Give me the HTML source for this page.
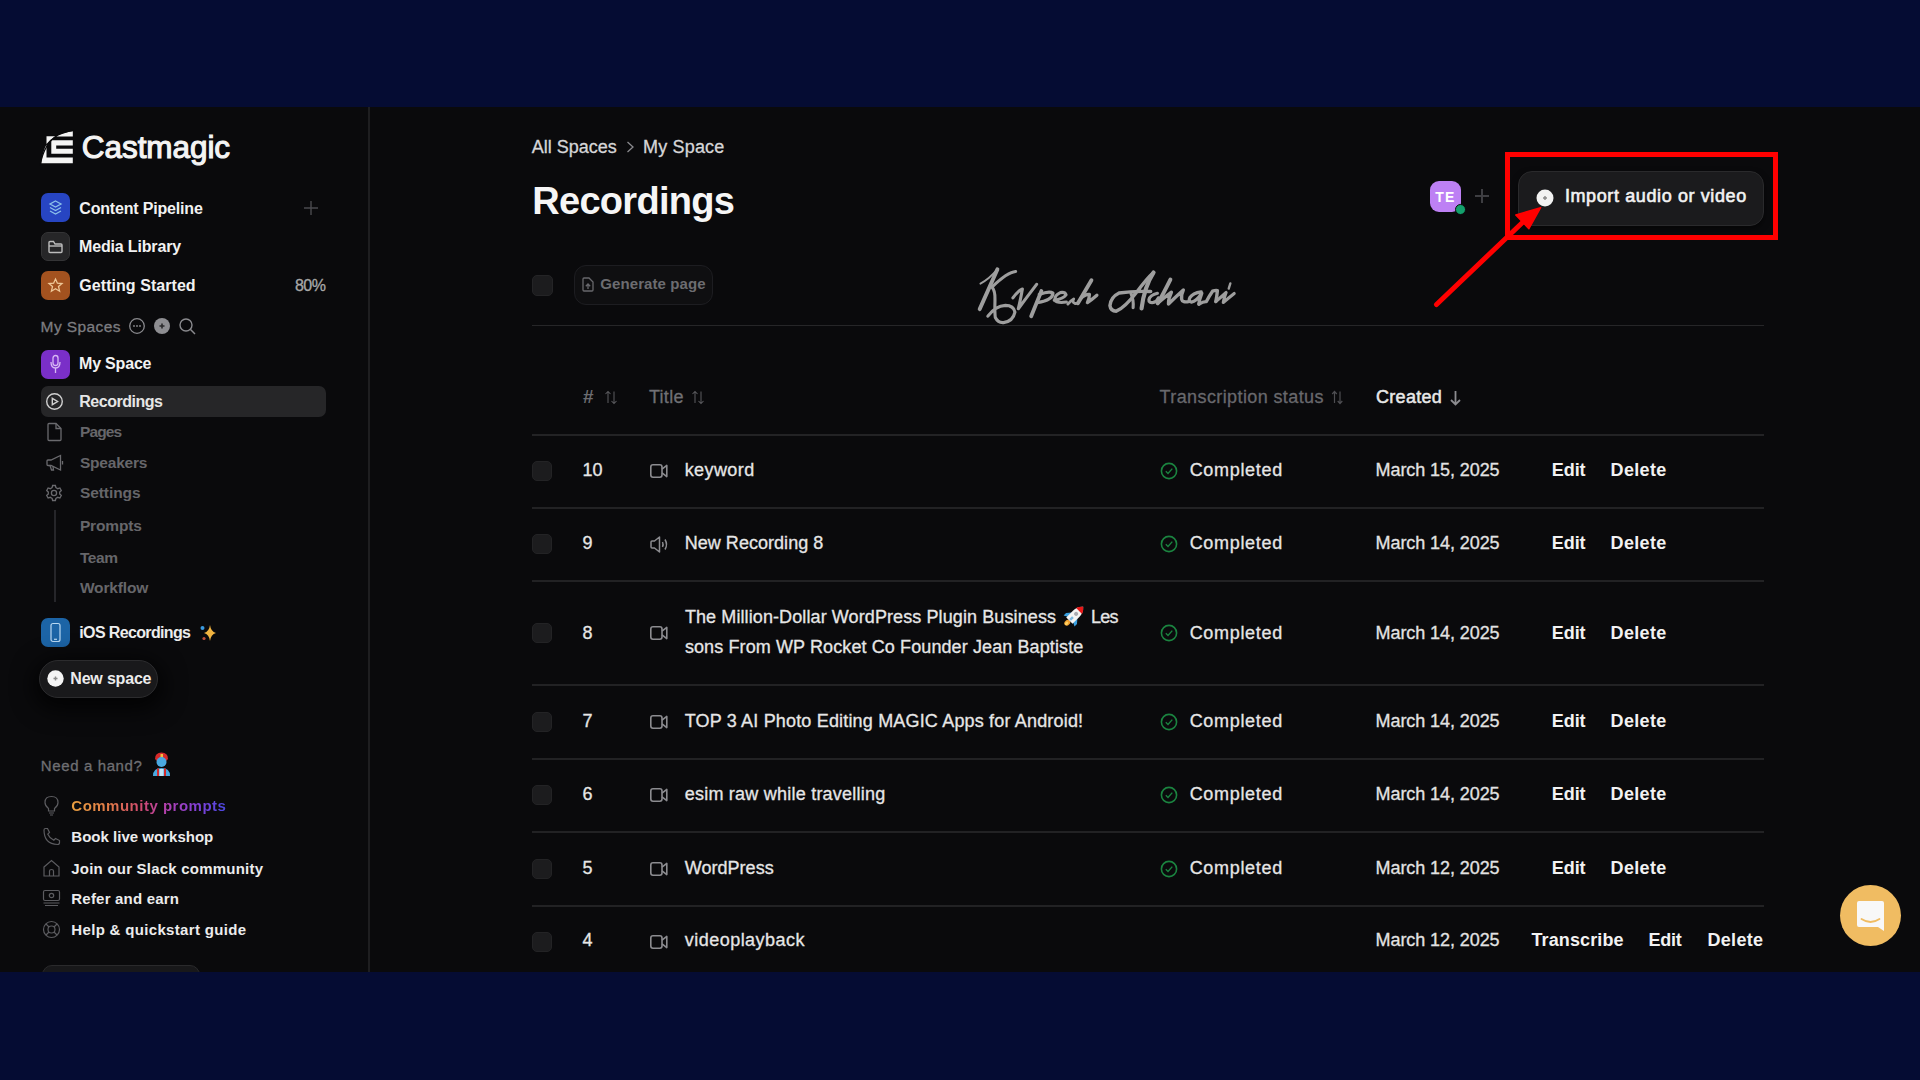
<!DOCTYPE html>
<html><head><meta charset="utf-8"><title>Castmagic</title>
<style>
html,body{margin:0;padding:0;}
body{width:1920px;height:1080px;overflow:hidden;background:#050c33;position:relative;font-family:"Liberation Sans",sans-serif;}
.app{position:absolute;left:0;top:107px;width:1920px;height:865px;background:#0a0a0c;overflow:hidden;}
.t{position:absolute;white-space:nowrap;}
.a{position:absolute;}
svg.a{overflow:visible;}
</style></head><body>
<div class="app"></div>
<!-- sidebar divider -->
<div class="a" style="left:368px;top:107px;width:2px;height:865px;background:#1e1e20"></div>

<!-- logo icon -->
<svg class="a" style="left:0;top:0" width="80" height="170" viewBox="0 0 80 170">
  <path d="M56 136.6 Q63 132 72.8 131.2 L72.8 136.6 Z" fill="#f4f4f4"/>
  <path d="M46.5 136.3 L55.6 136.3 Q50 139.5 46.5 144 Z" fill="#f4f4f4"/>
  <path d="M51.3 140.3 H72.8 V145.4 H56.2 V148.7 H72.8 V153.7 H51.3 Z" fill="#f4f4f4"/>
  <path d="M41.3 163.3 Q42.5 152 46.5 144.5 L46.5 157.6 H72.8 V163.3 Z" fill="#f4f4f4"/>
  <path d="M40 166 Q44 143 58 135 Q64 132 74 130" stroke="#0a0a0c" stroke-width="1.3" fill="none"/>
</svg>
<!-- sidebar top icons -->
<div class="a" style="left:41px;top:193px;width:29px;height:29px;border-radius:7px;background:#2745c2"></div>
<svg class="a" style="left:47px;top:199px" width="17" height="17" viewBox="0 0 17 17" fill="none" stroke="#8cc0ea" stroke-width="1.3">
  <path d="M8.5 2 L14 5 L8.5 8 L3 5 Z"/><path d="M3 8.5 L8.5 11.5 L14 8.5"/><path d="M3 12 L8.5 15 L14 12"/>
</svg>
<div class="a" style="left:41px;top:232px;width:27px;height:27px;border-radius:7px;background:#262628;border:1px solid #343436"></div>
<svg class="a" style="left:47px;top:239px" width="17" height="15" viewBox="0 0 17 15" fill="none" stroke="#bdbdbd" stroke-width="1.4">
  <path d="M2 4 L2 12.5 Q2 13.5 3 13.5 L14 13.5 Q15 13.5 15 12.5 L15 6 Q15 5 14 5 L8 5 L6.5 2.5 L3 2.5 Q2 2.5 2 3.5 Z"/><path d="M2 7 L15 7"/>
</svg>
<div class="a" style="left:41px;top:271px;width:29px;height:29px;border-radius:7px;background:#a3521f"></div>
<svg class="a" style="left:47px;top:277px" width="17" height="17" viewBox="0 0 17 17" fill="none" stroke="#efc898" stroke-width="1.3">
  <path d="M8.5 2 L10.4 6.2 L15 6.6 L11.5 9.6 L12.6 14.2 L8.5 11.8 L4.4 14.2 L5.5 9.6 L2 6.6 L6.6 6.2 Z"/>
</svg>
<!-- plus -->
<svg class="a" style="left:304px;top:201px" width="14" height="14" viewBox="0 0 14 14" stroke="#4a4a4e" stroke-width="1.4"><path d="M7 0V14M0 7H14"/></svg>

<!-- My Spaces icons -->
<svg class="a" style="left:128px;top:317px" width="70" height="20" viewBox="0 0 70 20" fill="none">
  <circle cx="9" cy="9" r="7.3" stroke="#8a8a8e" stroke-width="1.3"/>
  <circle cx="6" cy="9" r="0.9" fill="#8a8a8e"/><circle cx="9" cy="9" r="0.9" fill="#8a8a8e"/><circle cx="12" cy="9" r="0.9" fill="#8a8a8e"/>
  <circle cx="34" cy="9" r="8" fill="#8e8e92"/>
  <path d="M34 6.5V11.5M31.5 9H36.5" stroke="#2a2a2c" stroke-width="1.6"/>
  <circle cx="58" cy="8" r="6" stroke="#8a8a8e" stroke-width="1.4"/>
  <path d="M62.3 12.3 L67 17" stroke="#8a8a8e" stroke-width="1.5"/>
</svg>

<!-- My Space icon -->
<div class="a" style="left:41px;top:350px;width:29px;height:29px;border-radius:7px;background:#7a2fc8"></div>
<svg class="a" style="left:49px;top:354px" width="13" height="21" viewBox="0 0 13 21" fill="none" stroke="#d8b8f4" stroke-width="1.3">
  <rect x="4" y="1.5" width="5" height="10" rx="2.5"/><path d="M2 8 Q2 14 6.5 14 Q11 14 11 8"/><path d="M6.5 14V19"/>
</svg>

<!-- Recordings highlight -->
<div class="a" style="left:41px;top:386px;width:285px;height:31px;border-radius:7px;background:#262628"></div>
<svg class="a" style="left:45px;top:392px" width="19" height="19" viewBox="0 0 19 19" fill="none" stroke="#d0d0d0" stroke-width="1.4">
  <circle cx="9.5" cy="9.5" r="7.8"/><path d="M7.3 6.3 L12.6 9.5 L7.3 12.7 Z"/>
</svg>
<!-- Pages icon -->
<svg class="a" style="left:46px;top:422px" width="17" height="20" viewBox="0 0 17 20" fill="none" stroke="#6a6a6e" stroke-width="1.3">
  <path d="M2 2.5 Q2 1.5 3 1.5 L10 1.5 L15 6.5 L15 17.5 Q15 18.5 14 18.5 L3 18.5 Q2 18.5 2 17.5 Z"/><path d="M10 1.5 L10 6.5 L15 6.5"/>
</svg>
<!-- megaphone -->
<svg class="a" style="left:45px;top:454px" width="19" height="18" viewBox="0 0 19 18" fill="none" stroke="#6a6a6e" stroke-width="1.3">
  <path d="M2 6.5 L2 10.5 Q2 11.5 3 11.5 L6 11.5 L15.5 16 L15.5 1.5 L6 6 L3 6 Q2 6 2 7 Z"/><path d="M5 11.5 L6.5 16 L8.5 16 L8 12.5"/><path d="M17.5 7 L17.5 10.5"/>
</svg>
<!-- gear -->
<svg class="a" style="left:45px;top:484px" width="18" height="18" viewBox="0 0 18 18" fill="none" stroke="#6a6a6e" stroke-width="1.3">
  <circle cx="9" cy="9" r="2.6"/>
  <path d="M7.6 1.5 L10.4 1.5 L10.9 3.6 L12.8 4.7 L14.9 4 L16.3 6.5 L14.7 8 L14.7 10 L16.3 11.5 L14.9 14 L12.8 13.3 L10.9 14.4 L10.4 16.5 L7.6 16.5 L7.1 14.4 L5.2 13.3 L3.1 14 L1.7 11.5 L3.3 10 L3.3 8 L1.7 6.5 L3.1 4 L5.2 4.7 L7.1 3.6 Z"/>
</svg>
<!-- vertical tree line -->
<div class="a" style="left:54px;top:510px;width:1.5px;height:92px;background:#26262a"></div>

<!-- iOS icon -->
<div class="a" style="left:41px;top:618px;width:29px;height:29px;border-radius:7px;background:#1c64a6"></div>
<svg class="a" style="left:49px;top:622px" width="13" height="21" viewBox="0 0 13 21" fill="none" stroke="#b8d8f2" stroke-width="1.2">
  <rect x="2" y="1.5" width="9" height="18" rx="2"/><path d="M5 17.3H8"/>
</svg>
<!-- sparkles -->
<svg class="a" style="left:199px;top:624px" width="18" height="18" viewBox="0 0 18 18">
  <path d="M11 1 Q11.8 7.5 17 9 Q11.8 10.5 11 17 Q10.2 10.5 5 9 Q10.2 7.5 11 1 Z" fill="#f2b440"/>
  <circle cx="3.5" cy="4" r="2" fill="#3a9ae0"/>
  <circle cx="5" cy="14.5" r="1.6" fill="#c0503a"/>
</svg>

<!-- New space -->
<div class="a" style="left:39px;top:660px;width:119px;height:38px;border-radius:19px;box-shadow:0 6px 22px 6px rgba(0,0,0,0.75)"></div>
<div class="a" style="left:39px;top:660px;width:117px;height:36px;border-radius:19px;background:#19191b;border:1px solid #2c2c2e"></div>
<svg class="a" style="left:47px;top:670px" width="17" height="17" viewBox="0 0 17 17">
  <circle cx="8.5" cy="8.5" r="8.2" fill="#f4f4f4"/><path d="M8.5 6.5V10.5M6.5 8.5H10.5" stroke="#8a8a8a" stroke-width="1.4"/>
</svg>

<!-- Need a hand genie -->
<svg class="a" style="left:151px;top:752px" width="21" height="25" viewBox="0 0 21 25">
  <path d="M4 7 Q4 0.5 10.5 0.5 Q17 0.5 17 7 L15 9 L6 9 Z" fill="#d52a2a"/>
  <rect x="9.5" y="2" width="2.5" height="4" fill="#f0c040"/>
  <circle cx="10.5" cy="10" r="5" fill="#4aa8e0"/>
  <path d="M2 24 Q2 16 10.5 16 Q19 16 19 24 Z" fill="#4aa8e0"/>
  <rect x="6" y="16.5" width="2" height="7.5" fill="#d52a2a"/><rect x="13" y="16.5" width="2" height="7.5" fill="#d52a2a"/>
  <rect x="8.5" y="17" width="4" height="7" fill="#bfe4f8"/>
</svg>

<!-- help icons -->
<svg class="a" style="left:43px;top:795px" width="17" height="21" viewBox="0 0 17 21" fill="none" stroke="#5c5c60" stroke-width="1.2">
  <path d="M5.5 13.5 Q2 11 2 7.5 Q2 1.5 8.5 1.5 Q15 1.5 15 7.5 Q15 11 11.5 13.5 L11.5 16 L5.5 16 Z"/><path d="M6 18H11M7 20H10"/>
</svg>
<svg class="a" style="left:42px;top:827px" width="19" height="19" viewBox="0 0 19 19" fill="none" stroke="#5c5c60" stroke-width="1.2">
  <path d="M2 3 Q2 1.5 3.5 1.5 L5.5 1.5 L7.5 5.5 L5.8 7.2 Q7.5 11 11.8 13.2 L13.5 11.5 L17.5 13.5 L17.5 15.5 Q17.5 17.5 15.5 17.5 Q2 17 2 3 Z"/>
</svg>
<svg class="a" style="left:42px;top:859px" width="19" height="19" viewBox="0 0 19 19" fill="none" stroke="#5c5c60" stroke-width="1.2">
  <path d="M2 8 L9.5 1.5 L17 8 L17 17 L2 17 Z"/><path d="M7.5 17 L7.5 12 Q7.5 10.5 9.5 10.5 Q11.5 10.5 11.5 12 L11.5 17"/>
</svg>
<svg class="a" style="left:42px;top:889px" width="19" height="18" viewBox="0 0 19 18" fill="none" stroke="#5c5c60" stroke-width="1.2">
  <rect x="1.5" y="1.5" width="16" height="10" rx="1.5"/><circle cx="9.5" cy="6.5" r="2.2"/><path d="M1.5 14H17.5M3 16.5H16"/>
</svg>
<svg class="a" style="left:42px;top:920px" width="19" height="19" viewBox="0 0 19 19" fill="none" stroke="#5c5c60" stroke-width="1.2">
  <circle cx="9.5" cy="9.5" r="8"/><circle cx="9.5" cy="9.5" r="3.5"/><path d="M4 4L7 7M15 4L12 7M4 15L7 12M15 15L12 12"/>
</svg>
<!-- bottom partial button -->
<div class="a" style="left:42px;top:965px;width:158px;height:7px;overflow:hidden"><div style="width:156px;height:20px;border-radius:10px;background:#18181a;border:1px solid #2a2a2c"></div></div>

<!-- ===== MAIN ===== -->
<svg class="a" style="left:626px;top:141px" width="9" height="12" viewBox="0 0 9 12" fill="none" stroke="#8a8a8e" stroke-width="1.3"><path d="M1.5 1L7 6L1.5 11"/></svg>

<!-- avatar -->
<div class="a" style="left:1430px;top:181px;width:31px;height:31px;border-radius:9px;background:#bd80f4"></div>
<div class="a" style="left:1455px;top:204px;width:9px;height:9px;border-radius:50%;background:#13a06c;border:1px solid #0a0a0c"></div>
<svg class="a" style="left:1475px;top:189px" width="14" height="14" viewBox="0 0 14 14" stroke="#3e3e42" stroke-width="2"><path d="M7 0V14M0 7H14"/></svg>

<!-- import button -->
<div class="a" style="left:1518px;top:171px;width:244px;height:53px;border-radius:14px;background:#1b1b1d;border:1px solid #2a2a2c;box-shadow:0 3px 6px rgba(0,0,0,0.5)"></div>
<svg class="a" style="left:1536px;top:189px" width="18" height="18" viewBox="0 0 18 18">
  <circle cx="9" cy="9" r="8.5" fill="#f2f2f2"/><path d="M9 7V11M7 9H11" stroke="#8a8a8a" stroke-width="1.4"/>
</svg>
<!-- red annotation box -->
<div class="a" style="left:1505px;top:152px;width:263px;height:78px;border:5.5px solid #ff0000"></div>
<!-- arrow -->
<svg class="a" style="left:0;top:0" width="1920" height="1080" viewBox="0 0 1920 1080">
  <path d="M1436.5 304.5 L1523 222" stroke="#ff0000" stroke-width="5" stroke-linecap="round"/>
  <path d="M1540.6 207.7 L1515.8 215 L1528.9 228.7 Z" fill="#ff0000" stroke="#ff0000" stroke-width="1.5" stroke-linejoin="round"/>
</svg>

<!-- toolbar -->
<div class="a" style="left:532px;top:275px;width:19px;height:19px;border-radius:5px;background:#1c1c1e;border:1px solid #242426"></div>
<div class="a" style="left:574px;top:265px;width:137px;height:38px;border-radius:12px;background:#0f0f11;border:1px solid #1d1d21"></div>
<svg class="a" style="left:581px;top:277px" width="14" height="15" viewBox="0 0 14 15" fill="none" stroke="#68686c" stroke-width="1.3">
  <path d="M2 2 Q2 1 3 1 L8 1 L12 5 L12 13 Q12 14 11 14 L3 14 Q2 14 2 13 Z"/><path d="M7 7V12M4.8 9.2L7 7L9.2 9.2"/>
</svg>
<div class="a" style="left:532px;top:325px;width:1232px;height:1px;background:#262628"></div>

<!-- header sort icons -->
<svg class="a" style="left:604px;top:390px" width="14" height="15" viewBox="0 0 14 15" fill="none" stroke="#5a5a5e" stroke-width="1.05">
  <path d="M4 13V1.5M1.5 4L4 1.5L6.5 4"/><path d="M10 1.5V13.5M7.5 11L10 13.5L12.5 11"/>
</svg>
<svg class="a" style="left:691px;top:390px" width="14" height="15" viewBox="0 0 14 15" fill="none" stroke="#5a5a5e" stroke-width="1.05">
  <path d="M4 13V1.5M1.5 4L4 1.5L6.5 4"/><path d="M10 1.5V13.5M7.5 11L10 13.5L12.5 11"/>
</svg>
<svg class="a" style="left:1331px;top:390px" width="13" height="15" viewBox="0 0 13 15" fill="none" stroke="#4e4e52" stroke-width="1.2">
  <path d="M3.5 13V1.5M1.2 4L3.5 1.5L5.8 4"/><path d="M9 1.5V13.5M6.7 11L9 13.5L11.3 11"/>
</svg>
<svg class="a" style="left:1449px;top:390px" width="13" height="16" viewBox="0 0 13 16" fill="none" stroke="#8c8c90" stroke-width="1.8">
  <path d="M6.5 1V14.5M2 10L6.5 14.5L11 10"/>
</svg>
<div class="a" style="left:532px;top:434px;width:1232px;height:2px;background:#232325"></div>

<!-- rocket -->
<svg class="a" style="left:1058px;top:600px" width="32" height="32" viewBox="0 0 32 32">
 <g transform="rotate(45 16 16)">
  <ellipse cx="16" cy="25.5" rx="2.6" ry="3.2" fill="#f0a030"/>
  <ellipse cx="16" cy="26.5" rx="1.4" ry="2" fill="#ffd060"/>
  <path d="M12.2 15 L8.3 19.5 L8.3 23 L12.2 21 Z" fill="#3aa0e0"/>
  <path d="M19.8 15 L23.7 19.5 L23.7 23 L19.8 21 Z" fill="#3aa0e0"/>
  <path d="M16 3 Q20.5 7 20.5 13 L20.5 22.5 L11.5 22.5 L11.5 13 Q11.5 7 16 3 Z" fill="#f4f4f4"/>
  <path d="M16 3 Q19.5 6 20.2 8.8 L11.8 8.8 Q12.5 6 16 3 Z" fill="#e81818"/>
  <circle cx="16" cy="13" r="2.1" fill="#a8aab0"/>
  <rect x="14.8" y="17.5" width="2.4" height="4" fill="#7ab8e0"/>
 </g>
</svg>
<!-- chat widget -->
<div class="a" style="left:1839.5px;top:885px;width:61px;height:61px;border-radius:50%;background:#f0bc62"></div>
<svg class="a" style="left:1856px;top:900px" width="29" height="32" viewBox="0 0 29 32">
  <path d="M1 3 Q1 1 3 1 L26 1 Q28 1 28 3 L28 31 L22 27 L3 27 Q1 27 1 25 Z" fill="#f8f8f8"/>
  <path d="M5.5 19 Q14.5 25 23.5 19" stroke="#f0bc62" stroke-width="1.8" fill="none" stroke-linecap="round"/>
</svg>
<div class="a" style="left:532px;top:461.0px;width:18px;height:18px;border-radius:5px;background:#1c1c1e;border:1px solid #232325"></div>
<svg class="a" style="left:649px;top:463.0px" width="20" height="16" viewBox="0 0 20 16" fill="none" stroke="#8c8c90" stroke-width="1.6" stroke-linejoin="round"><rect x="1.8" y="1.8" width="11.2" height="12.4" rx="2.2"/><path d="M13 6.2 L17.8 2.4 L17.8 13.6 L13 9.8"/></svg>
<svg class="a" style="left:1160px;top:462.0px" width="18" height="18" viewBox="0 0 18 18" fill="none" stroke="#1b8440" stroke-width="1.6"><circle cx="9" cy="9" r="7.6"/><path d="M5.8 9.3 L8 11.4 L12.3 6.6" stroke-width="1.4"/></svg>
<div class="a" style="left:532px;top:507.00px;width:1232px;height:2px;background:#222224"></div>
<div class="a" style="left:532px;top:534.0px;width:18px;height:18px;border-radius:5px;background:#1c1c1e;border:1px solid #232325"></div>
<svg class="a" style="left:649px;top:536.0px" width="21" height="17" viewBox="0 0 21 17" fill="none" stroke="#8c8c90" stroke-width="1.5" stroke-linejoin="round"><path d="M2 6 Q2 5 3 5 L5.5 5 L10.5 1 L10.5 16 L5.5 12 L3 12 Q2 12 2 11 Z"/><path d="M13.5 6 Q14.7 8.5 13.5 11"/><path d="M16 3.5 Q19 8.5 16 13.5"/></svg>
<svg class="a" style="left:1160px;top:535.0px" width="18" height="18" viewBox="0 0 18 18" fill="none" stroke="#1b8440" stroke-width="1.6"><circle cx="9" cy="9" r="7.6"/><path d="M5.8 9.3 L8 11.4 L12.3 6.6" stroke-width="1.4"/></svg>
<div class="a" style="left:532px;top:580.00px;width:1232px;height:2px;background:#222224"></div>
<div class="a" style="left:532px;top:623.0px;width:18px;height:18px;border-radius:5px;background:#1c1c1e;border:1px solid #232325"></div>
<svg class="a" style="left:649px;top:625.0px" width="20" height="16" viewBox="0 0 20 16" fill="none" stroke="#8c8c90" stroke-width="1.6" stroke-linejoin="round"><rect x="1.8" y="1.8" width="11.2" height="12.4" rx="2.2"/><path d="M13 6.2 L17.8 2.4 L17.8 13.6 L13 9.8"/></svg>
<svg class="a" style="left:1160px;top:624.0px" width="18" height="18" viewBox="0 0 18 18" fill="none" stroke="#1b8440" stroke-width="1.6"><circle cx="9" cy="9" r="7.6"/><path d="M5.8 9.3 L8 11.4 L12.3 6.6" stroke-width="1.4"/></svg>
<div class="a" style="left:532px;top:684.00px;width:1232px;height:2px;background:#222224"></div>
<div class="a" style="left:532px;top:712.0px;width:18px;height:18px;border-radius:5px;background:#1c1c1e;border:1px solid #232325"></div>
<svg class="a" style="left:649px;top:714.0px" width="20" height="16" viewBox="0 0 20 16" fill="none" stroke="#8c8c90" stroke-width="1.6" stroke-linejoin="round"><rect x="1.8" y="1.8" width="11.2" height="12.4" rx="2.2"/><path d="M13 6.2 L17.8 2.4 L17.8 13.6 L13 9.8"/></svg>
<svg class="a" style="left:1160px;top:713.0px" width="18" height="18" viewBox="0 0 18 18" fill="none" stroke="#1b8440" stroke-width="1.6"><circle cx="9" cy="9" r="7.6"/><path d="M5.8 9.3 L8 11.4 L12.3 6.6" stroke-width="1.4"/></svg>
<div class="a" style="left:532px;top:757.50px;width:1232px;height:2px;background:#222224"></div>
<div class="a" style="left:532px;top:785.0px;width:18px;height:18px;border-radius:5px;background:#1c1c1e;border:1px solid #232325"></div>
<svg class="a" style="left:649px;top:787.0px" width="20" height="16" viewBox="0 0 20 16" fill="none" stroke="#8c8c90" stroke-width="1.6" stroke-linejoin="round"><rect x="1.8" y="1.8" width="11.2" height="12.4" rx="2.2"/><path d="M13 6.2 L17.8 2.4 L17.8 13.6 L13 9.8"/></svg>
<svg class="a" style="left:1160px;top:786.0px" width="18" height="18" viewBox="0 0 18 18" fill="none" stroke="#1b8440" stroke-width="1.6"><circle cx="9" cy="9" r="7.6"/><path d="M5.8 9.3 L8 11.4 L12.3 6.6" stroke-width="1.4"/></svg>
<div class="a" style="left:532px;top:831.00px;width:1232px;height:2px;background:#222224"></div>
<div class="a" style="left:532px;top:859.0px;width:18px;height:18px;border-radius:5px;background:#1c1c1e;border:1px solid #232325"></div>
<svg class="a" style="left:649px;top:861.0px" width="20" height="16" viewBox="0 0 20 16" fill="none" stroke="#8c8c90" stroke-width="1.6" stroke-linejoin="round"><rect x="1.8" y="1.8" width="11.2" height="12.4" rx="2.2"/><path d="M13 6.2 L17.8 2.4 L17.8 13.6 L13 9.8"/></svg>
<svg class="a" style="left:1160px;top:860.0px" width="18" height="18" viewBox="0 0 18 18" fill="none" stroke="#1b8440" stroke-width="1.6"><circle cx="9" cy="9" r="7.6"/><path d="M5.8 9.3 L8 11.4 L12.3 6.6" stroke-width="1.4"/></svg>
<div class="a" style="left:532px;top:904.50px;width:1232px;height:2px;background:#222224"></div>
<div class="a" style="left:532px;top:931.5px;width:18px;height:18px;border-radius:5px;background:#1c1c1e;border:1px solid #232325"></div>
<svg class="a" style="left:649px;top:933.5px" width="20" height="16" viewBox="0 0 20 16" fill="none" stroke="#8c8c90" stroke-width="1.6" stroke-linejoin="round"><rect x="1.8" y="1.8" width="11.2" height="12.4" rx="2.2"/><path d="M13 6.2 L17.8 2.4 L17.8 13.6 L13 9.8"/></svg>
<svg class="a" style="left:975px;top:262px" width="270" height="65" viewBox="0 0 270 65" fill="none" stroke="#9e9e9e" stroke-linecap="round" stroke-linejoin="round">
 <g transform="scale(0.0677)" stroke-width="44">
  <path d="M80 320 Q200 260 330 110" stroke-width="28"/>
  <path d="M330 110 L70 695" stroke-width="59"/>
  <path d="M600 140 Q480 150 250 370 Q300 420 295 560 Q290 760 300 820 Q340 900 420 895 Q560 880 590 740 Q570 640 450 640 Q300 650 190 800" stroke-width="46"/>
  <path d="M560 530 Q640 420 700 400 Q680 520 640 690 Q780 500 910 330" stroke-width="46"/>
  <path d="M980 430 L830 800" stroke-width="57"/>
  <path d="M950 480 Q1100 420 1150 460 Q1150 560 920 600" stroke-width="49"/>
  <path d="M1170 565 Q1300 545 1345 485 Q1330 440 1260 452 Q1175 490 1178 562 Q1205 612 1350 592" stroke-width="46"/>
  <path d="M1372 622 Q1420 565 1458 545 Q1432 592 1472 610 Q1502 620 1525 598" stroke-width="42"/>
  <path d="M1720 270 L1520 610" stroke-width="57"/>
  <path d="M1560 540 Q1640 470 1690 480 Q1690 540 1660 600 Q1720 560 1800 490" stroke-width="49"/>
 </g>
 <g transform="translate(130 0) scale(0.0703)" stroke-width="46">
  <path d="M650 420 Q400 410 200 440 Q80 500 70 620 Q80 700 160 700 Q280 650 450 430 Q600 230 690 150" stroke-width="49"/>
  <path d="M690 150 Q560 350 520 660" stroke-width="59"/>
  <path d="M370 450 Q410 540 400 650" stroke-width="44"/>
  <path d="M745 445 Q640 470 625 535 Q620 585 690 575 Q740 560 760 510" stroke-width="46"/>
  <path d="M930 250 Q820 470 750 588" stroke-width="56"/>
  <path d="M750 588 Q850 500 945 430 Q900 520 903 598 Q1000 500 1114 398 Q1080 470 1090 530 Q1100 585 1200 560" stroke-width="48"/>
  <path d="M1368 425 Q1250 440 1207 508 Q1180 560 1230 570 Q1300 560 1377 443 Q1340 540 1336 600" stroke-width="48"/>
  <path d="M1336 600 Q1400 560 1442 563 Q1490 470 1530 415 Q1570 400 1599 406 Q1590 500 1576 563" stroke-width="48"/>
  <path d="M1576 563 Q1650 500 1723 434 Q1690 520 1682 577 Q1760 510 1838 448" stroke-width="44"/>
  <path d="M1783 305 L1760 378" stroke-width="34"/>
 </g>
</svg>

<span class="t" style="left:81.80px;top:128.60px;font-size:31.5px;line-height:37.8px;font-weight:400;color:#f4f4f4;letter-spacing:-0.062px;-webkit-text-stroke:0.3px currentColor;-webkit-text-stroke:1.1px #f4f4f4;">Castmagic</span>
<span class="t" style="left:79.30px;top:199.40px;font-size:16px;line-height:19.2px;font-weight:700;color:#f2f2f2;letter-spacing:-0.182px;">Content Pipeline</span>
<span class="t" style="left:79.00px;top:237.40px;font-size:16px;line-height:19.2px;font-weight:700;color:#f2f2f2;letter-spacing:-0.161px;">Media Library</span>
<span class="t" style="left:79.30px;top:276.40px;font-size:16px;line-height:19.2px;font-weight:700;color:#f2f2f2;letter-spacing:0.053px;">Getting Started</span>
<span class="t" style="left:294.90px;top:276.40px;font-size:16px;line-height:19.2px;font-weight:400;color:#a8a8a8;letter-spacing:-0.466px;-webkit-text-stroke:0.3px currentColor;">80%</span>
<span class="t" style="left:40.60px;top:317.70px;font-size:15.5px;line-height:18.6px;font-weight:400;color:#7c7c80;letter-spacing:0.404px;-webkit-text-stroke:0.3px currentColor;">My Spaces</span>
<span class="t" style="left:79.00px;top:354.40px;font-size:16px;line-height:19.2px;font-weight:700;color:#f2f2f2;letter-spacing:-0.188px;">My Space</span>
<span class="t" style="left:79.30px;top:392.40px;font-size:16px;line-height:19.2px;font-weight:700;color:#e6e6e6;letter-spacing:-0.480px;">Recordings</span>
<span class="t" style="left:79.90px;top:422.70px;font-size:15.5px;line-height:18.6px;font-weight:700;color:#66666a;letter-spacing:-0.843px;">Pages</span>
<span class="t" style="left:79.90px;top:453.70px;font-size:15.5px;line-height:18.6px;font-weight:700;color:#66666a;letter-spacing:-0.193px;">Speakers</span>
<span class="t" style="left:79.90px;top:483.70px;font-size:15.5px;line-height:18.6px;font-weight:700;color:#66666a;letter-spacing:-0.065px;">Settings</span>
<span class="t" style="left:79.90px;top:516.70px;font-size:15.5px;line-height:18.6px;font-weight:700;color:#66666a;letter-spacing:-0.146px;">Prompts</span>
<span class="t" style="left:79.90px;top:548.70px;font-size:15.5px;line-height:18.6px;font-weight:700;color:#66666a;letter-spacing:-0.381px;">Team</span>
<span class="t" style="left:79.90px;top:578.70px;font-size:15.5px;line-height:18.6px;font-weight:700;color:#66666a;letter-spacing:-0.153px;">Workflow</span>
<span class="t" style="left:79.30px;top:623.40px;font-size:16px;line-height:19.2px;font-weight:700;color:#ededed;letter-spacing:-0.641px;">iOS Recordings</span>
<span class="t" style="left:70.30px;top:669.40px;font-size:16px;line-height:19.2px;font-weight:700;color:#ececec;letter-spacing:-0.190px;">New space</span>
<span class="t" style="left:40.80px;top:757.00px;font-size:15px;line-height:18.0px;font-weight:400;color:#6f6f73;letter-spacing:0.623px;-webkit-text-stroke:0.3px currentColor;">Need a hand?</span>
<span class="t" style="left:71.30px;top:797.00px;font-size:15px;line-height:18.0px;font-weight:700;color:transparent;letter-spacing:0.496px;background:linear-gradient(90deg,#eaa040 0%,#e07a48 25%,#d04a70 45%,#b040b0 62%,#8040d8 82%,#4a48e0 100%);-webkit-background-clip:text;background-clip:text;">Community prompts</span>
<span class="t" style="left:71.30px;top:828.00px;font-size:15px;line-height:18.0px;font-weight:700;color:#ececec;letter-spacing:0.017px;">Book live workshop</span>
<span class="t" style="left:71.30px;top:860.00px;font-size:15px;line-height:18.0px;font-weight:700;color:#ececec;letter-spacing:0.217px;">Join our Slack community</span>
<span class="t" style="left:71.30px;top:890.00px;font-size:15px;line-height:18.0px;font-weight:700;color:#ececec;letter-spacing:0.204px;">Refer and earn</span>
<span class="t" style="left:71.30px;top:921.00px;font-size:15px;line-height:18.0px;font-weight:700;color:#ececec;letter-spacing:0.330px;">Help &amp; quickstart guide</span>
<span class="t" style="left:531.80px;top:136.70px;font-size:18px;line-height:21.6px;font-weight:400;color:#d6d6d8;letter-spacing:-0.005px;-webkit-text-stroke:0.3px currentColor;">All Spaces</span>
<span class="t" style="left:643.05px;top:136.70px;font-size:18px;line-height:21.6px;font-weight:400;color:#d6d6d8;letter-spacing:0.172px;-webkit-text-stroke:0.3px currentColor;">My Space</span>
<span class="t" style="left:532.30px;top:178.70px;font-size:38px;line-height:45.6px;font-weight:700;color:#f6f6f6;letter-spacing:-0.716px;">Recordings</span>
<span class="t" style="left:600.30px;top:275.00px;font-size:15px;line-height:18.0px;font-weight:700;color:#6c6c70;letter-spacing:0.086px;">Generate page</span>
<span class="t" style="left:1564.90px;top:185.70px;font-size:18px;line-height:21.6px;font-weight:400;color:#f2f2f2;letter-spacing:0.610px;-webkit-text-stroke:0.3px currentColor;-webkit-text-stroke:0.6px #f2f2f2;">Import audio or video</span>
<span class="t" style="left:1435.30px;top:189.10px;font-size:14px;line-height:16.8px;font-weight:700;color:#ffffff;letter-spacing:1.109px;">TE</span>
<span class="t" style="left:583.05px;top:385.60px;font-size:19px;line-height:22.8px;font-weight:700;color:#6c6c70;">#</span>
<span class="t" style="left:648.90px;top:386.70px;font-size:18px;line-height:21.6px;font-weight:400;color:#707074;letter-spacing:0.314px;-webkit-text-stroke:0.3px currentColor;">Title</span>
<span class="t" style="left:1159.60px;top:386.70px;font-size:18px;line-height:21.6px;font-weight:400;color:#68686c;letter-spacing:0.394px;-webkit-text-stroke:0.3px currentColor;">Transcription status</span>
<span class="t" style="left:1376.00px;top:386.70px;font-size:18px;line-height:21.6px;font-weight:400;color:#e8e8e8;letter-spacing:0.292px;-webkit-text-stroke:0.3px currentColor;-webkit-text-stroke:0.5px #e8e8e8;">Created</span>
<span class="t" style="left:582.60px;top:459.70px;font-size:18px;line-height:21.6px;font-weight:400;color:#e6e6e6;-webkit-text-stroke:0.3px currentColor;">10</span>
<span class="t" style="left:684.70px;top:459.70px;font-size:18px;line-height:21.6px;font-weight:400;color:#e6e6e6;letter-spacing:0.411px;-webkit-text-stroke:0.3px currentColor;">keyword</span>
<span class="t" style="left:1189.70px;top:459.70px;font-size:18px;line-height:21.6px;font-weight:400;color:#e6e6e6;letter-spacing:0.682px;-webkit-text-stroke:0.3px currentColor;">Completed</span>
<span class="t" style="left:1375.60px;top:459.70px;font-size:18px;line-height:21.6px;font-weight:400;color:#e2e2e2;letter-spacing:-0.083px;-webkit-text-stroke:0.3px currentColor;">March 15, 2025</span>
<span class="t" style="left:1551.80px;top:459.70px;font-size:18px;line-height:21.6px;font-weight:700;color:#f2f2f2;letter-spacing:-0.067px;">Edit</span>
<span class="t" style="left:1610.60px;top:459.70px;font-size:18px;line-height:21.6px;font-weight:700;color:#f2f2f2;letter-spacing:0.334px;">Delete</span>
<span class="t" style="left:582.60px;top:532.70px;font-size:18px;line-height:21.6px;font-weight:400;color:#e6e6e6;-webkit-text-stroke:0.3px currentColor;">9</span>
<span class="t" style="left:684.70px;top:532.70px;font-size:18px;line-height:21.6px;font-weight:400;color:#e6e6e6;letter-spacing:0.037px;-webkit-text-stroke:0.3px currentColor;">New Recording 8</span>
<span class="t" style="left:1189.70px;top:532.70px;font-size:18px;line-height:21.6px;font-weight:400;color:#e6e6e6;letter-spacing:0.682px;-webkit-text-stroke:0.3px currentColor;">Completed</span>
<span class="t" style="left:1375.60px;top:532.70px;font-size:18px;line-height:21.6px;font-weight:400;color:#e2e2e2;letter-spacing:-0.083px;-webkit-text-stroke:0.3px currentColor;">March 14, 2025</span>
<span class="t" style="left:1551.80px;top:532.70px;font-size:18px;line-height:21.6px;font-weight:700;color:#f2f2f2;letter-spacing:-0.067px;">Edit</span>
<span class="t" style="left:1610.60px;top:532.70px;font-size:18px;line-height:21.6px;font-weight:700;color:#f2f2f2;letter-spacing:0.334px;">Delete</span>
<span class="t" style="left:582.60px;top:622.70px;font-size:18px;line-height:21.6px;font-weight:400;color:#e6e6e6;-webkit-text-stroke:0.3px currentColor;">8</span>
<span class="t" style="left:684.90px;top:606.70px;font-size:18px;line-height:21.6px;font-weight:400;color:#e6e6e6;letter-spacing:0.100px;-webkit-text-stroke:0.3px currentColor;">The Million-Dollar WordPress Plugin Business</span>
<span class="t" style="left:1091.10px;top:606.70px;font-size:18px;line-height:21.6px;font-weight:400;color:#e6e6e6;letter-spacing:-0.816px;-webkit-text-stroke:0.3px currentColor;">Les</span>
<span class="t" style="left:684.90px;top:636.70px;font-size:18px;line-height:21.6px;font-weight:400;color:#e6e6e6;letter-spacing:0.106px;-webkit-text-stroke:0.3px currentColor;">sons From WP Rocket Co Founder Jean Baptiste</span>
<span class="t" style="left:1189.70px;top:622.70px;font-size:18px;line-height:21.6px;font-weight:400;color:#e6e6e6;letter-spacing:0.682px;-webkit-text-stroke:0.3px currentColor;">Completed</span>
<span class="t" style="left:1375.60px;top:622.70px;font-size:18px;line-height:21.6px;font-weight:400;color:#e2e2e2;letter-spacing:-0.083px;-webkit-text-stroke:0.3px currentColor;">March 14, 2025</span>
<span class="t" style="left:1551.80px;top:622.70px;font-size:18px;line-height:21.6px;font-weight:700;color:#f2f2f2;letter-spacing:-0.067px;">Edit</span>
<span class="t" style="left:1610.60px;top:622.70px;font-size:18px;line-height:21.6px;font-weight:700;color:#f2f2f2;letter-spacing:0.334px;">Delete</span>
<span class="t" style="left:582.60px;top:710.70px;font-size:18px;line-height:21.6px;font-weight:400;color:#e6e6e6;-webkit-text-stroke:0.3px currentColor;">7</span>
<span class="t" style="left:684.70px;top:710.70px;font-size:18px;line-height:21.6px;font-weight:400;color:#e6e6e6;letter-spacing:0.174px;-webkit-text-stroke:0.3px currentColor;">TOP 3 AI Photo Editing MAGIC Apps for Android!</span>
<span class="t" style="left:1189.70px;top:710.70px;font-size:18px;line-height:21.6px;font-weight:400;color:#e6e6e6;letter-spacing:0.682px;-webkit-text-stroke:0.3px currentColor;">Completed</span>
<span class="t" style="left:1375.60px;top:710.70px;font-size:18px;line-height:21.6px;font-weight:400;color:#e2e2e2;letter-spacing:-0.083px;-webkit-text-stroke:0.3px currentColor;">March 14, 2025</span>
<span class="t" style="left:1551.80px;top:710.70px;font-size:18px;line-height:21.6px;font-weight:700;color:#f2f2f2;letter-spacing:-0.067px;">Edit</span>
<span class="t" style="left:1610.60px;top:710.70px;font-size:18px;line-height:21.6px;font-weight:700;color:#f2f2f2;letter-spacing:0.334px;">Delete</span>
<span class="t" style="left:582.60px;top:783.70px;font-size:18px;line-height:21.6px;font-weight:400;color:#e6e6e6;-webkit-text-stroke:0.3px currentColor;">6</span>
<span class="t" style="left:684.70px;top:783.70px;font-size:18px;line-height:21.6px;font-weight:400;color:#e6e6e6;letter-spacing:0.230px;-webkit-text-stroke:0.3px currentColor;">esim raw while travelling</span>
<span class="t" style="left:1189.70px;top:783.70px;font-size:18px;line-height:21.6px;font-weight:400;color:#e6e6e6;letter-spacing:0.682px;-webkit-text-stroke:0.3px currentColor;">Completed</span>
<span class="t" style="left:1375.60px;top:783.70px;font-size:18px;line-height:21.6px;font-weight:400;color:#e2e2e2;letter-spacing:-0.083px;-webkit-text-stroke:0.3px currentColor;">March 14, 2025</span>
<span class="t" style="left:1551.80px;top:783.70px;font-size:18px;line-height:21.6px;font-weight:700;color:#f2f2f2;letter-spacing:-0.067px;">Edit</span>
<span class="t" style="left:1610.60px;top:783.70px;font-size:18px;line-height:21.6px;font-weight:700;color:#f2f2f2;letter-spacing:0.334px;">Delete</span>
<span class="t" style="left:582.60px;top:857.70px;font-size:18px;line-height:21.6px;font-weight:400;color:#e6e6e6;-webkit-text-stroke:0.3px currentColor;">5</span>
<span class="t" style="left:684.70px;top:857.70px;font-size:18px;line-height:21.6px;font-weight:400;color:#e6e6e6;letter-spacing:0.037px;-webkit-text-stroke:0.3px currentColor;">WordPress</span>
<span class="t" style="left:1189.70px;top:857.70px;font-size:18px;line-height:21.6px;font-weight:400;color:#e6e6e6;letter-spacing:0.682px;-webkit-text-stroke:0.3px currentColor;">Completed</span>
<span class="t" style="left:1375.60px;top:857.70px;font-size:18px;line-height:21.6px;font-weight:400;color:#e2e2e2;letter-spacing:-0.083px;-webkit-text-stroke:0.3px currentColor;">March 12, 2025</span>
<span class="t" style="left:1551.80px;top:857.70px;font-size:18px;line-height:21.6px;font-weight:700;color:#f2f2f2;letter-spacing:-0.067px;">Edit</span>
<span class="t" style="left:1610.60px;top:857.70px;font-size:18px;line-height:21.6px;font-weight:700;color:#f2f2f2;letter-spacing:0.334px;">Delete</span>
<span class="t" style="left:582.60px;top:929.70px;font-size:18px;line-height:21.6px;font-weight:400;color:#e6e6e6;-webkit-text-stroke:0.3px currentColor;">4</span>
<span class="t" style="left:684.70px;top:929.70px;font-size:18px;line-height:21.6px;font-weight:400;color:#e6e6e6;letter-spacing:0.485px;-webkit-text-stroke:0.3px currentColor;">videoplayback</span>
<span class="t" style="left:1375.60px;top:929.70px;font-size:18px;line-height:21.6px;font-weight:400;color:#e2e2e2;letter-spacing:-0.083px;-webkit-text-stroke:0.3px currentColor;">March 12, 2025</span>
<span class="t" style="left:1531.50px;top:929.70px;font-size:18px;line-height:21.6px;font-weight:700;color:#f2f2f2;letter-spacing:0.117px;">Transcribe</span>
<span class="t" style="left:1648.60px;top:929.70px;font-size:18px;line-height:21.6px;font-weight:700;color:#f2f2f2;letter-spacing:-0.267px;">Edit</span>
<span class="t" style="left:1707.50px;top:929.70px;font-size:18px;line-height:21.6px;font-weight:700;color:#f2f2f2;letter-spacing:0.294px;">Delete</span>
</body></html>
